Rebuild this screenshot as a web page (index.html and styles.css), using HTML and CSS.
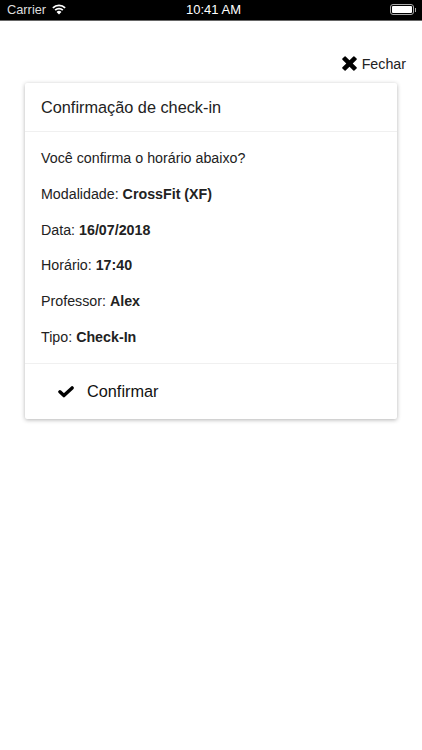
FILE: index.html
```html
<!DOCTYPE html>
<html>
<head>
  <title>Check-in</title>
  <link rel="stylesheet" href="styles.css">
</head>
<body>
  <!-- iOS status bar -->
  <div class="status-bar">
    <div class="status-left">
      <span>Carrier</span>
      <svg class="wifi" viewBox="0 0 16 12" width="14" height="11">
        <path d="M8 11.8 L5.2 8.8 A3.9 3.9 0 0 1 10.8 8.8 Z" fill="#fff" />
        <path d="M3.6 6.8 A6.2 6.2 0 0 1 12.4 6.8" fill="none" stroke="#fff" stroke-width="2" />
        <path d="M1 4.2 A10 10 0 0 1 15 4.2" fill="none" stroke="#fff" stroke-width="2" />
      </svg>
    </div>
    <div class="status-time">10:41 AM</div>
    <div class="status-right">
      <div class="battery"><div class="battery-fill"></div></div>
      <div class="battery-tip"></div>
    </div>
  </div>

  <div class="close-row">
    <svg class="close-icon" viewBox="0 0 14 14" width="15" height="15">
      <path d="M3.4 0.4 L7 4 L10.6 0.4 Q11.1 -0.1 11.6 0.4 L13.6 2.4 Q14.1 2.9 13.6 3.4 L10 7 L13.6 10.6 Q14.1 11.1 13.6 11.6 L11.6 13.6 Q11.1 14.1 10.6 13.6 L7 10 L3.4 13.6 Q2.9 14.1 2.4 13.6 L0.4 11.6 Q-0.1 11.1 0.4 10.6 L4 7 L0.4 3.4 Q-0.1 2.9 0.4 2.4 L2.4 0.4 Q2.9 -0.1 3.4 0.4 Z" fill="#000" />
    </svg>
    <span>Fechar</span>
  </div>

  <div class="card">
    <div class="card-header">Confirmação de check-in</div>
    <div class="card-body">
      <p>Você confirma o horário abaixo?</p>
      <p>Modalidade: <b>CrossFit (XF)</b></p>
      <p>Data: <b>16/07/2018</b></p>
      <p>Horário: <b>17:40</b></p>
      <p>Professor: <b>Alex</b></p>
      <p>Tipo: <b>Check-In</b></p>
    </div>
    <div class="card-footer">
      <svg class="check-icon" viewBox="0 0 16 12" width="16" height="12">
        <path d="M1.9 5.8 L5.9 9.6 L14.1 1.9" fill="none" stroke="#000" stroke-width="3.4" stroke-linejoin="round" stroke-linecap="round" />
      </svg>
      <span>Confirmar</span>
    </div>
  </div>
</body>
</html>
```

FILE: styles.css
```css
* {
  box-sizing: border-box;
}
body {
  margin: 0;
  height: 750px;
  overflow: hidden;
  background-color: white;
  color: #222;
  font-family: "Liberation Sans", Arial, sans-serif;
}
/* Status bar */
.status-bar {
  display: grid;
  grid-template-columns: 1fr auto 1fr;
  align-items: center;
  height: 21px;
  padding: 0 6px 1px 7px;
  background-color: black;
  border-bottom: 1px solid #666;
  color: white;
  font-size: 12.8px;
}
.status-left {
  display: flex;
  align-items: center;
  gap: 6px;
  color: #ddd;
}
.status-time {
  padding-left: 4px;
  font-size: 13px;
}
.status-right {
  display: flex;
  align-items: center;
  justify-content: flex-end;
}
.battery {
  width: 24px;
  height: 11px;
  padding: 1px;
  border: 1px solid #aaa;
  border-radius: 3px;
}
.battery-fill {
  height: 100%;
  background-color: white;
  border-radius: 1px;
}
.battery-tip {
  width: 1.5px;
  height: 4px;
  margin-left: 1px;
  background-color: #aaa;
}
/* Close link */
.close-row {
  display: flex;
  align-items: center;
  justify-content: flex-end;
  gap: 5px;
  height: 62px;
  padding: 23px 16px 0 0;
  font-size: 14.25px;
  color: #222;
}
/* Card */
.card {
  display: flex;
  flex-direction: column;
  width: 372px;
  height: 336px;
  margin-left: 25px;
  background-color: white;
  border-radius: 2px;
  box-shadow: 0 1px 4px rgba(0, 0, 0, 0.3);
}
.card-header {
  display: flex;
  align-items: center;
  height: 49px;
  padding-left: 16px;
  border-bottom: 1px solid #f0f0f0;
  font-size: 16.3px;
  color: #222;
}
.card-body {
  display: flex;
  flex-direction: column;
  gap: 18.75px;
  height: 232px;
  padding: 18px 16px 0;
  border-bottom: 1px solid #f0f0f0;
  font-size: 14.25px;
  line-height: 17px;
}
.card-body p {
  margin: 0;
}
.card-footer {
  display: flex;
  flex: 1;
  align-items: center;
  gap: 13px;
  padding-left: 33px;
  font-size: 16.3px;
  color: #111;
}
```
